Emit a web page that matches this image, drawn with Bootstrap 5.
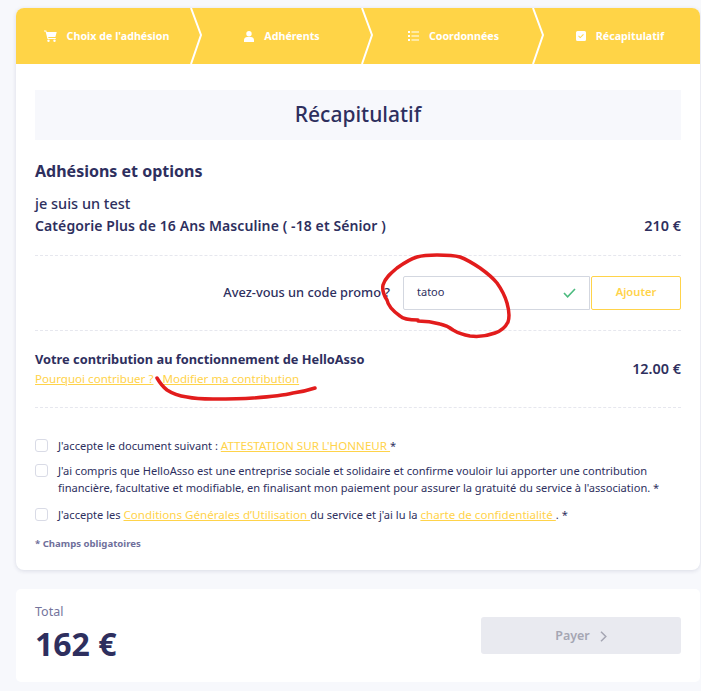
<!DOCTYPE html>
<html lang="fr">
<head>
    <meta charset="UTF-8" />
    <meta name="viewport" content="width=device-width, initial-scale=1" />
    <title>Récapitulatif</title>
    <link rel="stylesheet" href="https://cdn.jsdelivr.net/npm/bootstrap@5.3.0/dist/css/bootstrap.min.css"/>
    <style>
        body {
          font-family: "Noto Sans", "Open Sans", sans-serif;
          background: #f7f8fc;
          color: #2e2f5e;
          font-size: 11.1px;
          overflow: hidden;
        }

        a { color: #ffd34a; font-size: 11.6px; }

        .page-wrap {
          position: relative;
          width: 701px;
          height: 691px;
          padding: 8px 1px 0 16px;
        }

        .main-panel {
          background: #fff;
          border-radius: 8px;
          box-shadow: 0 1px 4px rgba(46, 47, 94, 0.14);
          height: 562px;
        }

        .steps {
          position: relative;
          display: grid;
          grid-template-columns: 179px 172px 171px 1fr;
          height: 56px;
          background: #ffd447;
          border-radius: 8px 8px 0 0;
          color: #fff;
          font-weight: 700;
          font-size: 10.7px;
        }

        .step-item { gap: 10px; padding-left: 2px; }
        .step-item svg { display: block; fill: #fff; }

        .step-sep {
          position: absolute;
          top: 0;
          height: 56px;
          width: 14px;
          fill: none;
          stroke: #fff;
          stroke-width: 2;
        }

        .panel-body { padding: 26px 19px 0; }

        .title-box {
          height: 50px;
          background: #f7f8fc;
          font-size: 21px;
          font-weight: 500;
          margin: 0 0 21px;
        }

        .sect-title { font-size: 16px; font-weight: 700; margin: 0 0 12px; line-height: 20px; }
        .offer-name { font-size: 14.5px; font-weight: 500; line-height: 20px; margin-bottom: 2px; }
        .offer-cat { font-size: 14px; font-weight: 600; line-height: 20px; letter-spacing: .1px; }
        .price { font-size: 14.4px; font-weight: 600; }

        .dash-top { border-top: 1px dashed #e6e7ee; }

        .promo-row { height: 75px; margin-top: 18px; padding-top: 20px; }
        .promo-label { font-size: 12.8px; font-weight: 500; margin: 7px 13px 0 0; }
        .promo-field {
          width: 187px;
          height: 34px;
          border: 1px solid #d3d7e0;
          border-radius: 2px 0 0 2px;
          padding: 0 13px;
          font-size: 11px;
        }
        .promo-add {
          width: 90px;
          height: 34px;
          margin-left: 1px;
          padding: 0;
          border: 1px solid #ffd34a;
          border-radius: 2px;
          background: #fff;
          color: #ffd34a;
          font-size: 11.2px;
          font-weight: 600;
        }
        .promo-add:disabled { color: #ffd34a; border-color: #ffd34a; opacity: 1; }

        .contrib-row { height: 77px; padding-top: 19px; }
        .contrib-title { font-size: 12.8px; font-weight: 700; line-height: 19px; }
        .contrib-links { display: flex; gap: 9px; line-height: 19px; }

        .terms-list { padding-top: 29px; }
        .term-line { display: flex; gap: 10px; line-height: 17px; margin-bottom: 8px; }
        .term-line.is-long { margin-bottom: 10px; }
        .term-box {
          flex: none;
          width: 13px;
          height: 13px;
          margin: 2px 0 0 0;
          border: 1px solid #d9dbe6;
          border-radius: 3px;
          background: #fff;
        }
        .term-note { font-size: 9.6px; font-weight: 700; color: #6f6f9b; margin-top: 14px; }

        .total-panel {
          background: #fff;
          border-radius: 5px;
          height: 93px;
          margin-top: 19px;
          padding: 15px 19px 0;
        }
        .total-label { font-size: 12.5px; color: #74749c; line-height: 16px; }
        .total-value { font-size: 32px; font-weight: 700; line-height: 42px; margin-top: 3px; }
        .pay-btn {
          width: 200px;
          height: 37px;
          margin-top: 13px;
          padding-top: 1px;
          background: #e9eaf0;
          border-radius: 3px;
          color: #a5a6b3;
          font-size: 12.5px;
          font-weight: 600;
          gap: 10px;
        }

        .red-marks {
          position: absolute;
          inset: 0;
          pointer-events: none;
          fill: none;
          stroke: #e21c1c;
          stroke-width: 3.5;
          stroke-linecap: round;
          stroke-linejoin: round;
        }
    </style>
</head>
<body>
<div class="page-wrap">
    <div class="main-panel">
        <div class="steps">
            <div class="step-item d-flex align-items-center justify-content-center">
                <svg width="13" height="12" viewBox="0 0 13 12"><path d="M0 .5h2.3l.4 1.5h10l-1.3 5H4.2l.3 1h7.3v1H3.5L1.6 1.5H0z"/><circle cx="4.5" cy="10.8" r="1.2"/><circle cx="10.5" cy="10.8" r="1.2"/></svg>
                <span>Choix de l'adhésion</span>
            </div>
            <div class="step-item d-flex align-items-center justify-content-center">
                <svg width="10" height="11" viewBox="0 0 10 11"><circle cx="5" cy="2.8" r="2.7"/><path d="M0 11V9c0-2 1.6-3 3-3h4c1.4 0 3 1 3 3v2z"/></svg>
                <span>Adhérents</span>
            </div>
            <div class="step-item d-flex align-items-center justify-content-center">
                <svg width="11" height="10" viewBox="0 0 11 10"><path d="M0 0h2v2H0zM0 4h2v2H0zM0 8h2v2H0zM3.500.5H11v1H3.500zM3.500 4.500H11v1H3.500zM3.500 8.500H11v1H3.500z"/></svg>
                <span>Coordonnées</span>
            </div>
            <div class="step-item d-flex align-items-center justify-content-center">
                <svg width="10" height="10" viewBox="0 0 10 10"><path fill-rule="evenodd" d="M1.500 0h7A1.500 1.500 0 0 1 10 1.500v7A1.500 1.500 0 0 1 8.500 10h-7A1.500 1.500 0 0 1 0 8.500v-7A1.500 1.500 0 0 1 1.500 0zM4.200 7.300 7.800 3.700 7.100 3 4.200 5.900 2.900 4.600 2.200 5.300z"/></svg>
                <span>Récapitulatif</span>
            </div>
            <svg class="step-sep" style="left:174px" viewBox="0 0 14 56"><path d="M1 0 11 27 1 56"/></svg>
            <svg class="step-sep" style="left:345px" viewBox="0 0 14 56"><path d="M1 0 11 27 1 56"/></svg>
            <svg class="step-sep" style="left:516px" viewBox="0 0 14 56"><path d="M1 0 11 27 1 56"/></svg>
        </div>

        <div class="panel-body">
            <h1 class="title-box d-flex align-items-center justify-content-center">Récapitulatif</h1>
            <h2 class="sect-title">Adhésions et options</h2>
            <div class="offer-name">je suis un test</div>
            <div class="d-flex justify-content-between align-items-center">
                <span class="offer-cat">Catégorie Plus de 16 Ans Masculine ( -18 et Sénior )</span>
                <span class="price">210 €</span>
            </div>

            <div class="promo-row dash-top d-flex justify-content-end align-items-start">
                <span class="promo-label">Avez-vous un code promo ?</span>
                <div class="promo-field d-flex align-items-center justify-content-between">
                    <span>tatoo</span>
                    <svg width="13" height="10" viewBox="0 0 13 10" fill="none" stroke="#4cbb7f" stroke-width="1.6"><path d="M1 5l3.600 3.800L12 1"/></svg>
                </div>
                <button class="promo-add" type="button" disabled>Ajouter</button>
            </div>

            <div class="contrib-row dash-top d-flex justify-content-between">
                <div>
                    <div class="contrib-title">Votre contribution au fonctionnement de HelloAsso</div>
                    <div class="contrib-links"><a href="#">Pourquoi contribuer ?</a><a href="#">Modifier ma contribution</a></div>
                </div>
                <span class="price align-self-start mt-2">12.00 €</span>
            </div>

            <div class="terms-list dash-top">
                <div class="term-line"><span class="term-box"></span><span>J'accepte le document suivant : <a href="#">ATTESTATION SUR L'HONNEUR </a> *</span></div>
                <div class="term-line is-long"><span class="term-box"></span><span>J'ai compris que HelloAsso est une entreprise sociale et solidaire et confirme vouloir lui apporter une contribution financière, facultative et modifiable, en finalisant mon paiement pour assurer la gratuité du service à l'association. *</span></div>
                <div class="term-line"><span class="term-box"></span><span>J'accepte les <a href="#">Conditions Générales d’Utilisation </a> du service et j'ai lu la <a href="#">charte de confidentialité </a>. *</span></div>
                <div class="term-note">* Champs obligatoires</div>
            </div>
        </div>
    </div>

    <div class="total-panel d-flex justify-content-between">
        <div>
            <div class="total-label">Total</div>
            <div class="total-value">162 €</div>
        </div>
        <div class="pay-btn d-flex align-items-center justify-content-center">
            <span>Payer</span>
            <svg width="7" height="11" viewBox="0 0 7 11" fill="none" stroke="#a5a6b3" stroke-width="1.500"><path d="M1 .8 5.800 5.500 1 10.200"/></svg>
        </div>
    </div>

    <svg class="red-marks" width="701" height="691" viewBox="0 0 701 691">
        <path d="M418 320C410 320 403 319 400 316C393 311 388 306 387 300C383 294 382 290 383 285C385 278 391 273 397 268C404 263 410 259 417 257C424 255 430 255 437 255C445 255 453 255 460 257C468 260 474 264 480 268C487 273 493 278 497 283C502 290 505 296 507 303C509 310 510 316 508 322C505 328 501 331 495 333C487 336 478 337 470 336C464 335 458 333 453 330C449 327 445 325 440 324C433 322 425 321 418 321"/>
        <path d="M157 378C160 383 163 387 167 390C173 394 180 396 187 397C196 399 204 399 213 399C227 399 240 399 253 398C267 397 281 396 293 393C301 392 309 390 315 388"/>
    </svg>
</div>

<script src="https://cdn.jsdelivr.net/npm/bootstrap@5.3.0/dist/js/bootstrap.bundle.min.js"></script>
</body>
</html>
